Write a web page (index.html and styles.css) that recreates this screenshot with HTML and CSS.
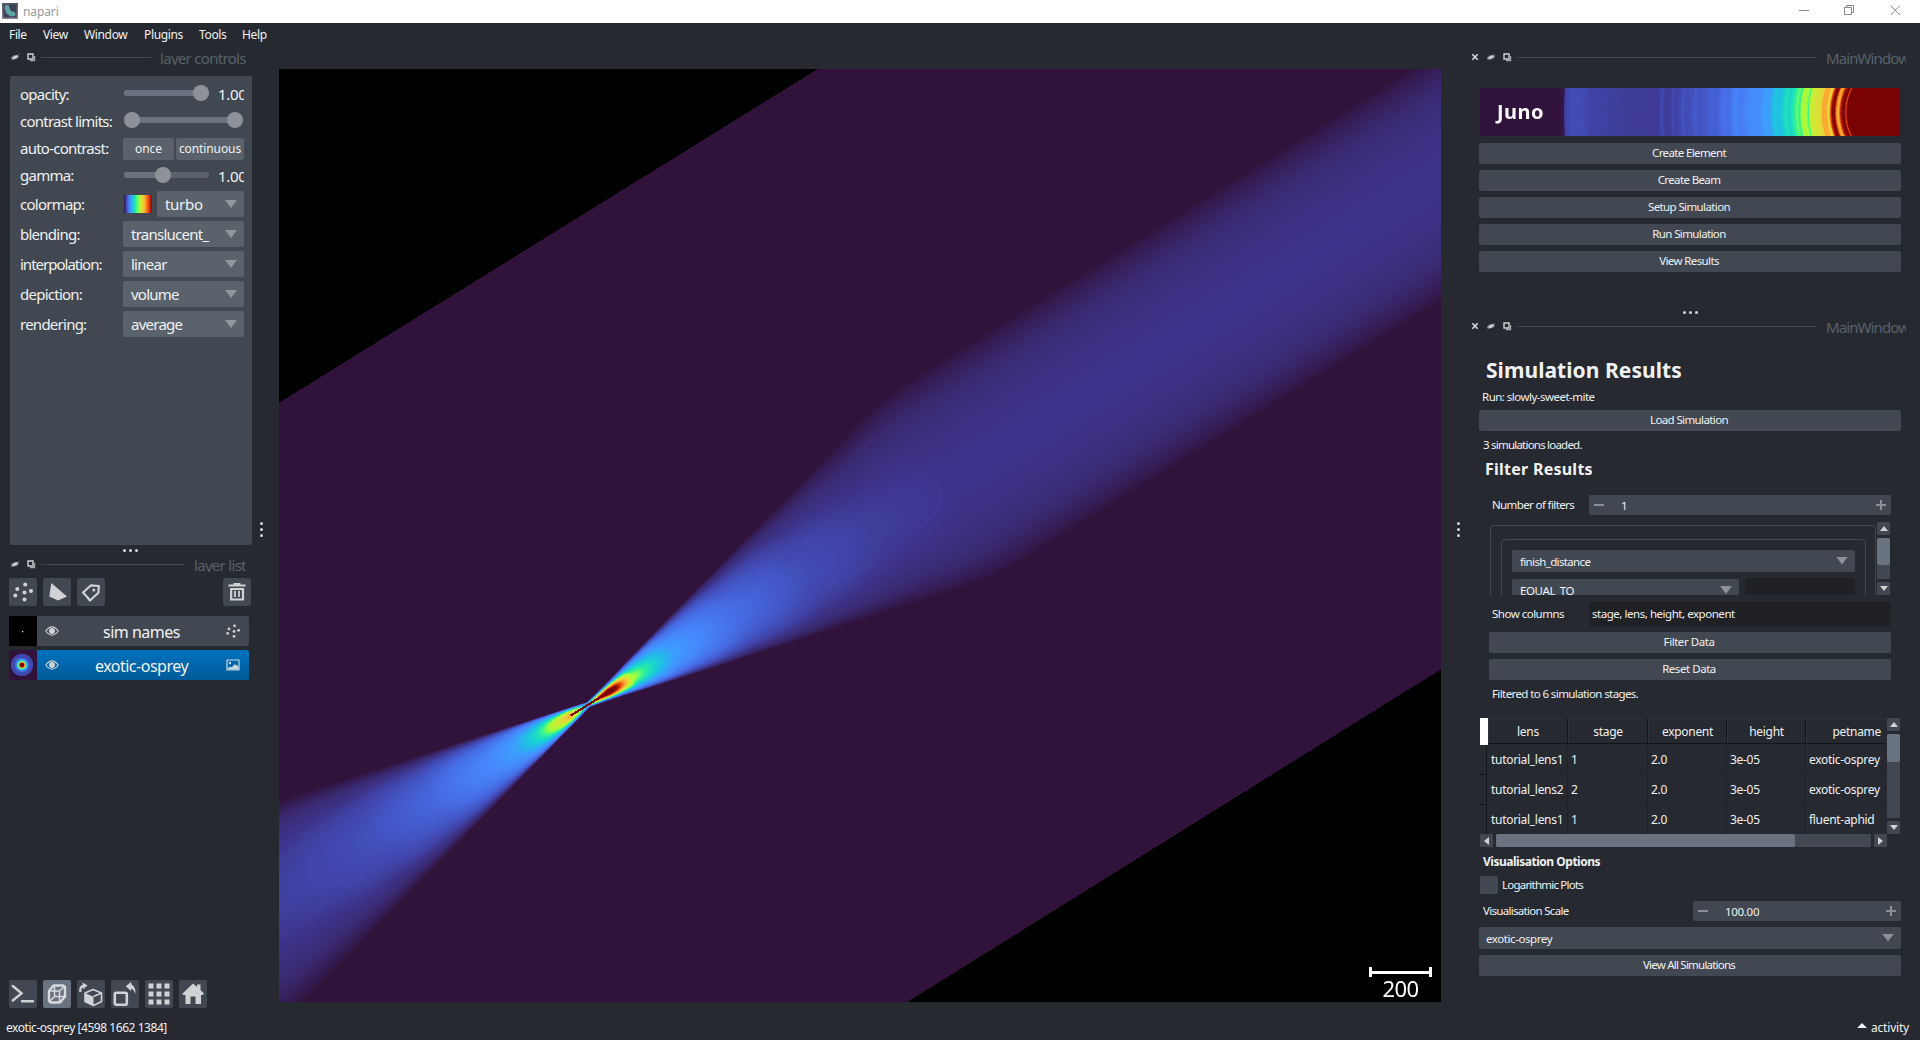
FILE: index.html
```html
<!DOCTYPE html>
<html lang="en">
<head>
<meta charset="utf-8">
<title>napari</title>
<link rel="stylesheet" href="styles.css">
</head>
<body>
<svg class="defs" width="0" height="0">
  <symbol id="hide" viewBox="0 0 10 10"><path d="M.8 6.800Q1.500 3.500 5 3.200Q8.500 3 9 4Q8.500 7 5 7.200Q2 7.500 .8 6.800Z" fill="#85888e"/><path d="M3 6.800L7 3.800" stroke="#dcdddf" stroke-width="2"/><path d="M1.500 8L3 6.800M7 3.800L8.800 2.400" stroke="#85888e"/></symbol>
  <symbol id="float" viewBox="0 0 10 10"><path d="M2 2H7V7H2Z" fill="none" stroke="#d0d1d3" stroke-width="1.400"/><path d="M8.600 4V8.600H4" fill="none" stroke="#a5a8ac" stroke-width="1.200"/></symbol>
  <symbol id="close" viewBox="0 0 10 10"><path d="M2.300 2.300L7.700 7.700M7.700 2.300L2.300 7.700" stroke="#d8d9db" stroke-width="1.600"/></symbol>
  <symbol id="eye" viewBox="0 0 14 10"><path d="M.7 5Q7-3.300 13.300 5Q7 13.300 .7 5Z" fill="none" stroke="#c6cace" stroke-width="1.200"/><circle cx="7" cy="5" r="3" fill="#d0d3d6"/></symbol>
  <symbol id="points" viewBox="0 0 28 28"><g fill="#d1d2d4"><circle cx="16.200" cy="6.600" r="2"/><circle cx="8.300" cy="11" r="2"/><circle cx="22" cy="13" r="2"/><circle cx="15.500" cy="14.600" r="2"/><circle cx="6.300" cy="17.400" r="2"/><circle cx="15.500" cy="21.600" r="2"/></g></symbol>
</svg>

<header class="titlebar">
  <svg class="logo" width="16" height="16"><defs><linearGradient id="lg" x2="0" y2="1"><stop stop-color="#54566b"/><stop offset="1" stop-color="#8f8499"/></linearGradient></defs><rect width="16" height="16" fill="url(#lg)"/><rect x="1.500" y="1.500" width="13" height="13" fill="#3c4052"/><path d="M5 4.500Q5.500 8 7 9.500Q9 11 11 11" fill="none" stroke="#5da3a3" stroke-width="5" stroke-linecap="round"/></svg>
  <span class="app">napari</span>
  <svg class="winbtns" width="110" height="23"><g fill="none" stroke="#8b8b8b"><path d="M9 10.500H19M54.500 7.500H61.500V14.500H54.500ZM56.500 7V5.500H63.500V12.500H62M100.500 5.500L110 15M110 5.500L100.500 15"/></g></svg>
</header>
<nav class="menubar"><span>File</span><span>View</span><span>Window</span><span>Plugins</span><span>Tools</span><span>Help</span></nav>

<main class="main">
  <section class="left">
    <div class="dock"><svg class="di"><use href="#hide"/></svg><svg class="di"><use href="#float"/></svg><i class="rule"></i><span class="dtitle dt-controls">layer controls</span></div>
    <div class="controls">
      <div class="row r-op"><label>opacity:</label><div class="slider"><i class="track"></i><i class="knob k-end"></i></div><span class="val">1.00</span></div>
      <div class="row r-cl"><label>contrast limits:</label><div class="slider wide"><i class="track"></i><i class="knob k-start"></i><i class="knob k-end2"></i></div></div>
      <div class="row r-ac"><label>auto-contrast:</label><div class="pair"><button class="once">once</button><button class="cont">continuous</button></div></div>
      <div class="row r-ga"><label>gamma:</label><div class="slider"><i class="track half"></i><i class="knob k-mid"></i></div><span class="val">1.00</span></div>
      <div class="row r-cb"><label>colormap:</label><i class="swatch"></i><div class="combo short">turbo<i class="tri"></i></div></div>
      <div class="row r-cb"><label>blending:</label><div class="combo">translucent_<i class="tri"></i></div></div>
      <div class="row r-cb"><label class="tight">interpolation:</label><div class="combo">linear<i class="tri"></i></div></div>
      <div class="row r-cb"><label>depiction:</label><div class="combo">volume<i class="tri"></i></div></div>
      <div class="row r-cb"><label>rendering:</label><div class="combo">average<i class="tri"></i></div></div>
    </div>
    <div class="hdots"><i></i><i></i><i></i></div>
    <div class="dock dock-list"><svg class="di"><use href="#hide"/></svg><svg class="di"><use href="#float"/></svg><i class="rule"></i><span class="dtitle dt-list">layer list</span></div>
    <div class="tools">
      <svg class="sq"><use href="#points"/></svg>
      <svg class="sq" viewBox="0 0 28 28"><path d="M8.300 5L24 18.500L15 22.500L6.300 18.500Z" fill="#d1d2d4"/></svg>
      <svg class="sq" viewBox="0 0 28 28"><path d="M6 14.500L14 7.300L21.800 8L21.400 14.800L13 22.500Q10.500 19 6 14.500Z" fill="none" stroke="#d1d2d4" stroke-width="2.200" stroke-linejoin="round"/><circle cx="16.800" cy="12" r="1.500" fill="#d1d2d4"/></svg>
      <svg class="sq trash" viewBox="0 0 28 28"><path d="M5.500 7.500H22.500M10.500 6H17.500M8.200 11V21.500H20V11Z" fill="none" stroke="#d1d2d4" stroke-width="2.200"/><path d="M12 12.800V19M16 12.800V19" stroke="#d1d2d4" stroke-width="1.800"/></svg>
    </div>
    <div class="layer"><svg class="thumb" viewBox="0 0 28 30"><rect width="28" height="30"/><rect x="13" y="15" width="1.200" height="1.200" fill="#fff"/></svg><div class="lrow"><svg class="eye"><use href="#eye"/></svg><span class="lname">sim names</span><svg class="ltype" viewBox="4 4 20 20"><use href="#points" width="28" height="28"/></svg></div></div>
    <div class="layer"><svg class="thumb" viewBox="0 0 28 30"><defs><radialGradient id="th"><stop offset=".18" stop-color="#7a0403"/><stop offset=".2" stop-color="#e8400a"/><stop offset=".27" stop-color="#fbc93a"/><stop offset=".32" stop-color="#4df884"/><stop offset=".42" stop-color="#28bceb"/><stop offset=".52" stop-color="#4680f6"/><stop offset=".65" stop-color="#3f4bb4"/><stop offset=".95" stop-color="#4145ab"/><stop offset="1" stop-color="#30123b"/></radialGradient></defs><rect width="28" height="30" fill="#30123b"/><circle cx="13" cy="15" r="11.500" fill="url(#th)"/></svg><div class="lrow sel"><svg class="eye"><use href="#eye"/></svg><span class="lname">exotic-osprey</span><svg class="ltype" viewBox="0 0 14 14"><path d="M1 2H13V12H1Z" fill="none" stroke="#ccd8e2" stroke-width="1.200" stroke-linejoin="round"/><circle cx="4" cy="5" r="1.200" fill="#ccd8e2"/><path d="M1.500 11.500V10.500L4 8.500L5.500 9.500L9 6L10 7.500L11 7L12.800 9.500V11.500Z" fill="#ccd8e2"/></svg></div></div>
    <div class="viewer-buttons">
      <svg class="sq" viewBox="0 0 28 28"><path d="M3.800 6L12.500 13.300L3.800 20.500M13 21.300H24" fill="none" stroke="#d1d2d4" stroke-width="2.400" stroke-linecap="round"/></svg>
      <svg class="sq on" viewBox="0 0 28 28"><g fill="none" stroke="#d8dadc" stroke-linejoin="round"><path d="M10.500 5.500H20.500L22 7V16.500L17 22.500H7.500L6 21V11Z" stroke-width="2.400"/><path d="M6.500 11H16.500L21.500 6.500M16.500 11V22M11.500 6.500V16.500H21.500M11.500 16.500L7 21" stroke-width="1.500"/></g></svg>
      <svg class="sq" viewBox="0 0 28 28"><path d="M16 9.500L24.500 13V21.500L16.500 25.500L8 21.500V13Z" fill="none" stroke="#d1d2d4" stroke-width="1.600" stroke-linejoin="round"/><path d="M8 13L16.500 16.800V25.500L8 21.500Z" fill="#d1d2d4"/><path d="M16.500 16.500L24.500 13" stroke="#d1d2d4" stroke-width="1.500"/><path d="M3.300 12Q2.800 6.500 7 5.700" fill="none" stroke="#d1d2d4" stroke-width="2.200"/><path d="M5.500 2.500L10.500 5.500L6 9.200Z" fill="#d1d2d4"/></svg>
      <svg class="sq" viewBox="0 0 28 28"><rect x="3.800" y="12.800" width="12" height="12" rx="1.500" fill="none" stroke="#d1d2d4" stroke-width="2.600"/><path d="M14.800 6.200L20 2L20.500 4.500Q25 7 24.300 14Q23 9.500 20.300 8.500L20 11Z" fill="#d1d2d4"/></svg>
      <svg class="sq" viewBox="0 0 28 28"><path d="M3.500 3.500h5v5h-5zM11.500 3.500h5v5h-5zM19.500 3.500h5v5h-5zM3.500 11.500h5v5h-5zM11.500 11.500h5v5h-5zM19.500 11.500h5v5h-5zM3.500 19.500h5v5h-5zM11.500 19.500h5v5h-5zM19.500 19.500h5v5h-5z" fill="#d1d2d4"/></svg>
      <svg class="sq" viewBox="0 0 28 28"><path d="M14 3.500L18 7V4.500H21.500V10L25 13.500L23.500 15H22V24H16.500V16.500H11.500V24H6.500V15H4.500L3.300 13.800Z" fill="#d1d2d4"/></svg>
    </div>
    <div class="vdots"><i></i><i></i><i></i></div>
  </section>

  <section class="view">
    <canvas id="beam" width="1162" height="933"></canvas>
    <div class="scalebar"><i class="bar"></i><span>200</span></div>
  </section>

  <section class="right">
    <div class="dock"><svg class="di"><use href="#close"/></svg><svg class="di"><use href="#hide"/></svg><svg class="di"><use href="#float"/></svg><i class="rule"></i><span class="dtitle dt-main">MainWindow</span></div>
    <div class="juno"><canvas id="banner" width="420" height="48"></canvas><span>Juno</span></div>
    <div class="stack">
      <button>Create Element</button><button>Create Beam</button><button>Setup Simulation</button><button>Run Simulation</button><button>View Results</button>
    </div>
    <div class="hdots"><i></i><i></i><i></i></div>
    <div class="dock dock2"><svg class="di"><use href="#close"/></svg><svg class="di"><use href="#hide"/></svg><svg class="di"><use href="#float"/></svg><i class="rule"></i><span class="dtitle dt-main">MainWindow</span></div>
    <h1>Simulation Results</h1>
    <p class="run">Run: slowly-sweet-mite</p>
    <button class="load">Load Simulation</button>
    <p class="loaded">3 simulations loaded.</p>
    <h2>Filter Results</h2>
    <div class="inner">
      <div class="frow"><span class="fl">Number of filters</span><div class="spin"><i class="minus"></i><b>1</b><i class="plus"></i></div></div>
      <div class="scroller">
        <div class="frames"><div class="outer"><div class="group">
          <div class="cmb">finish_distance<i class="tri"></i></div>
          <div class="two"><div class="cmb eq">EQUAL_TO<i class="tri"></i></div><div class="field"></div></div>
        </div></div></div>
        <div class="vbar"><i class="sb up"></i><i class="tr"><i class="th th1"></i></i><i class="sb down"></i></div>
      </div>
      <div class="frow cols"><span class="fl">Show columns</span><div class="field f2">stage, lens, height, exponent</div></div>
      <button>Filter Data</button>
      <button>Reset Data</button>
      <p class="filtered">Filtered to 6 simulation stages.</p>
    </div>
    <div class="tablewrap">
      <div class="tbl">
        <div class="tr0"><i class="corner"></i><span class="c1">lens</span><span>stage</span><span>exponent</span><span>height</span><span class="pet">petname</span></div>
        <div class="trow"><i class="rh"></i><span class="c1">tutorial_lens1</span><span>1</span><span>2.0</span><span>3e-05</span><span>exotic-osprey</span></div>
        <div class="trow"><i class="rh"></i><span class="c1">tutorial_lens2</span><span>2</span><span>2.0</span><span>3e-05</span><span>exotic-osprey</span></div>
        <div class="trow"><i class="rh"></i><span class="c1">tutorial_lens1</span><span>1</span><span>2.0</span><span>3e-05</span><span>fluent-aphid</span></div>
      </div>
      <div class="vbar tall"><i class="sb up"></i><i class="tr"><i class="th th2"></i></i><i class="sb down"></i></div>
      <div class="hbar"><i class="sb lt"></i><i class="tr"><i class="th th3"></i></i><i class="sb rt"></i></div>
    </div>
    <h3>Visualisation Options</h3>
    <div class="check"><i></i><span>Logarithmic Plots</span></div>
    <div class="vscale"><span>Visualisation Scale</span><div class="spin s2"><i class="minus"></i><b>100.00</b><i class="plus"></i></div></div>
    <div class="cmb vis">exotic-osprey<i class="tri"></i></div>
    <button class="all">View All Simulations</button>
    <div class="vdots vr"><i></i><i></i><i></i></div>
  </section>
</main>
<footer class="status"><span class="st">exotic-osprey [4598 1662 1384]</span><span class="act"><i></i>activity</span></footer>
<script src="script.js"></script>
</body>
</html>
```
FILE: styles.css
```css
* { box-sizing: border-box; }
html { height: 1040px; overflow: hidden; }
body { margin: 0; width: 1920px; height: 1040px; overflow: hidden; display: flex; flex-direction: column; background: #262930; color: #f0f1f2; font: 12px/16px "Noto Sans", "Open Sans", sans-serif; letter-spacing: -.35px; }
i { display: block; flex: none; }
p, h1, h2, h3 { margin: 0; white-space: nowrap; }
svg { flex: none; display: block; }
.defs { position: absolute; }
button { display: flex; align-items: center; justify-content: center; width: 100%; height: 21px; padding: 0 2px 1px 0; border: 0; border-radius: 2px; background: #414851; color: #f0f1f2; font: inherit; letter-spacing: inherit; white-space: nowrap; }

.titlebar { display: flex; height: 23px; background: #fff; color: #999; flex: none; }
.logo { margin: 3px 0 0 2px; }
.app { margin: 4px 0 0 5px; letter-spacing: -.1px; }
.winbtns { margin-left: auto; margin-right: 20px; overflow: visible; }
.menubar { display: grid; grid-template-columns: 34px 41px 60px 55px 43px 40px; padding-left: 9px; height: 23px; line-height: 24px; flex: none; }

.main { display: grid; grid-template-columns: 279px 1162px 479px; height: 970px; flex: none; }
.left, .right { position: relative; display: flex; flex-direction: column; }
.dock { display: flex; height: 22px; align-items: center; color: #59616b; flex: none; }
.di { width: 10px; height: 10px; margin-right: 6px; }
.rule { flex: 1; height: 1px; background: #414851; margin-top: 1px; }
.dtitle { height: 18px; margin-top: -2px; line-height: 23px; overflow: hidden; font-size: 15px; white-space: nowrap; }
.left .dock { padding: 0 33px 0 10px; margin-bottom: 8px; }
.left .rule { margin-right: 9px; margin-left: -1px; }
.left .dock-list { margin: 1px 0 3px; }
.dt-controls { width: 86px; letter-spacing: -.7px; }
.dt-list { width: 52px; letter-spacing: -.7px; }

.controls { width: 242px; height: 469px; margin-left: 10px; padding: 5px 8px 0 10px; background: #414851; border-radius: 2px; font-size: 15px; letter-spacing: -.75px; flex: none; }
.row { display: flex; align-items: center; }
.row label { width: 103px; flex: none; white-space: nowrap; margin-top: -1px; }
.row .tight { letter-spacing: -1px; }
.r-op { height: 26px; } .r-cl { height: 28px; } .r-ac { height: 27px; } .r-ga { height: 27px; } .r-cb { height: 30px; }
.slider { position: relative; width: 85px; height: 16px; margin: -2px 9px 0 1px; flex: none; }
.slider.wide { width: 119px; margin-right: 0; }
.track { height: 6px; margin: 5px 0; border-radius: 2px; background: #6a7380; }
.wide .track { margin-right: 1px; }
.half { background: linear-gradient(90deg, #6a7380 46%, #5a626c 46%); }
.knob { position: absolute; top: 0; width: 16px; height: 16px; border-radius: 50%; background: #8d9299; }
.k-end { right: 0; } .k-start { left: 0; } .k-end2 { right: 0; } .k-mid { left: 31px; }
.val { width: 26px; overflow: hidden; white-space: nowrap; letter-spacing: -.3px; }
.pair { display: flex; gap: 2px; }
.pair button { height: 22px; background: #5a626c; font-size: 12px; padding: 0; letter-spacing: -.1px; }
.pair .once { width: 51px; } .pair .cont { width: 68px; }
.swatch { width: 28px; height: 18px; margin: 0 5px 0 1px; background: linear-gradient(90deg, #30123b, #4145ab 8%, #4675ed 16%, #39a2fc 25%, #1bcfd4 34%, #24eca6 41%, #61fc6c 48%, #a4fc3b 55%, #d1e834 62%, #f3c63a 70%, #fe9b2d 77%, #f36315 84%, #d93806 90%, #b11901 95%, #7a0402); }
.combo { display: flex; align-items: center; justify-content: space-between; width: 121px; height: 26px; padding: 0 7px 0 8px; border-radius: 2px; background: #5a626c; }
.combo.short { width: 87px; letter-spacing: -.3px; }
.tri { width: 12px; height: 8px; background: #93979d; clip-path: polygon(0 0, 100% 0, 50% 100%); }
.hdots { display: flex; gap: 3px; justify-content: center; height: 3px; flex: none; }
.left .hdots { margin: 4px 19px 1px 0; }
.left .hdots + .dock { margin-top: 0; }
.hdots i, .vdots i { width: 3px; height: 3px; border-radius: 50%; background: #d5d6d8; }
.vdots { position: absolute; left: 260px; top: 476px; display: grid; gap: 3px; }
.tools { display: flex; gap: 6px; padding-left: 9px; margin-bottom: 10px; }
.trash { margin-left: 112px; }
.sq { width: 28px; height: 28px; border-radius: 2px; background: #414851; }
.sq.on { background: #6a7380; }
.layer { display: flex; height: 30px; margin: 0 30px 4px 9px; font-size: 16px; flex: none; }
.thumb { width: 28px; height: 30px; }
.lrow { display: flex; flex: 1; align-items: center; justify-content: space-between; background: #414851; border-radius: 0 2px 2px 0; padding: 0 9px 0 8px; }
.lrow.sel { background: linear-gradient(#0072bd, #005a98); }
.eye { width: 14px; height: 10px; }
.ltype { width: 14px; height: 14px; }
.lname { padding: 2px 2px 0 0; letter-spacing: -.5px; }
.viewer-buttons { display: flex; gap: 6px; margin: auto 0 8px 9px; }

.view { position: relative; padding-top: 23px; }
.view canvas { display: block; }
.scalebar { position: absolute; left: 1090px; top: 921px; width: 63px; text-align: center; font-size: 22px; line-height: 26px; letter-spacing: -.6px; }
.scalebar .bar { height: 10px; border: solid #fff; border-width: 0 3px; background: linear-gradient(#fff, #fff) 0 4px / 100% 3px no-repeat; }
.scalebar span { display: block; color: #fff; margin-top: -2px; }

.right { padding: 0 19px 0 38px; font-size: 11.5px; letter-spacing: -.62px; }
.right .dock { margin: 0 -5px 20px -9px; }
.right .rule { margin-right: 9px; margin-left: -1px; }
.dt-main { width: 80px; letter-spacing: -.9px; }
.juno { position: relative; height: 48px; margin-left: 1px; flex: none; }
.juno canvas { display: block; }
.juno span { position: absolute; left: 17px; top: 12px; font: bold 20px/24px "Noto Sans", sans-serif; color: #fff; letter-spacing: .5px; }
.stack { display: grid; gap: 6px; margin-top: 7px; }
.right .hdots { margin: 39px 0 0; }
.right .dock2 { margin-top: 1px; margin-bottom: 20px; }
h1 { font: bold 21px/26px "Noto Sans", sans-serif; letter-spacing: .05px; padding-left: 7px; }
.run { margin: 6px 0 5px 3px; letter-spacing: -.52px; }
.loaded { margin: 6px 0 6px 4px; }
.load { flex: none; }
h2 { font: bold 16px/20px "Noto Sans", sans-serif; letter-spacing: .25px; padding-left: 6px; margin-bottom: 16px; }
.inner { padding: 0 10px; flex: none; }
.frow { display: flex; align-items: center; }
.fl { width: 100px; padding-left: 3px; white-space: nowrap; }
.spin { display: flex; align-items: center; width: 302px; height: 20px; padding: 0 5px; border-radius: 2px; background: #414851; }
.spin b { font-weight: 400; margin: 1px auto 0 17px; }
.minus, .plus { width: 10px; height: 10px; background: linear-gradient(#8d9197, #8d9197) 0 4px / 10px 2px no-repeat; }
.plus { background: linear-gradient(#8d9197, #8d9197) 0 4px / 10px 2px no-repeat, linear-gradient(#8d9197, #8d9197) 4px 0 / 2px 10px no-repeat; }
.loaded, .check, .all { letter-spacing: -.78px; }
.scroller { display: flex; height: 73px; margin: 7px 0; overflow: hidden; }
.frames { width: 388px; height: 73px; padding: 3px 0 0 1px; overflow: hidden; }
.outer { width: 386px; height: 100px; border: 1px solid #414851; border-radius: 4px; padding: 13px 0 0 10px; }
.group { width: 365px; height: 100px; border: 1px solid #414851; border-radius: 4px; padding: 10px; }
.cmb { display: flex; align-items: center; justify-content: space-between; height: 22px; padding: 1px 7px 0 8px; border-radius: 2px; background: #414851; flex: none; letter-spacing: -.65px; }
.cmb .tri { margin-top: -2px; background: #8d9197; }
.two { display: flex; gap: 6px; margin-top: 6px; }
.eq { width: 227px; height: 23px; margin-top: 1px; letter-spacing: -.4px; }
.field { width: 110px; height: 24px; border-radius: 2px; background: #202124; }
.vbar { display: flex; flex-direction: column; gap: 3px; width: 13px; height: 73px; }
.tr { flex: 1; background: #414851; border-radius: 1px; }
.th { background: #6a7380; border-radius: 2px; }
.th1 { height: 27px; } .th2 { height: 28px; } .th3 { width: 299px; height: 13px; }
.sb { position: relative; width: 13px; height: 13px; background: #414851; border-radius: 1px; }
.sb::after { content: ""; position: absolute; left: 3px; top: 4px; width: 8px; height: 5px; background: #d1d2d4; clip-path: polygon(50% 0, 100% 100%, 0 100%); }
.down::after { clip-path: polygon(0 0, 100% 0, 50% 100%); }
.lt::after, .rt::after { left: 4px; top: 3px; width: 5px; height: 8px; clip-path: polygon(0 50%, 100% 0, 100% 100%); }
.rt::after { clip-path: polygon(0 0, 100% 50%, 0 100%); }
.f2 { width: 302px; padding: 4px 3px; letter-spacing: -.46px; }
.cols { margin-bottom: 6px; }
.cols .fl { letter-spacing: -.5px; }
.inner button { letter-spacing: -.45px; }
.inner button + button { margin-top: 6px; }
.filtered { margin: 6px 0 16px 3px; letter-spacing: -.6px; }
.tablewrap { display: grid; grid-template-columns: 407px 13px; grid-template-rows: 116px 13px; margin-left: 1px; flex: none; font-size: 12px; }
.tbl { overflow: hidden; width: 406px; letter-spacing: -.3px; }
.tr0, .trow { display: grid; grid-template-columns: 8px 80px 80px 79px 79px 81px; }
.tr0 { height: 27px; line-height: 26px; text-align: center; }
.tr0 span { height: 26px; border-right: 1px solid #141518; border-bottom: 1px solid #141518; border-left: 1px solid #30333a; border-top: 1px solid #30333a; }
.tr0 .pet { text-align: right; padding-right: 6px; border-right: 0; }
.corner { height: 27px; background: #fff; }
.trow { height: 30px; line-height: 29px; }
.trow span { padding-left: 3px; border-right: 1px solid #202329; border-bottom: 1px solid #202329; white-space: nowrap; }
.rh { width: 7px; height: 30px; border-right: 1px solid #141518; border-bottom: 1px solid #141518; }
.tall { height: 116px; }
.hbar { display: flex; gap: 3px; width: 407px; height: 13px; grid-column: 1; }
h3 { font: bold 12px/16px "Noto Sans", sans-serif; letter-spacing: -.48px; margin: 7px 0 6px 4px; }
.check { display: flex; align-items: center; gap: 4px; height: 18px; margin-left: 1px; }
.check i { width: 18px; height: 18px; border-radius: 2px; background: #414851; }
.vscale { display: flex; align-items: center; justify-content: space-between; margin: 7px 0 6px; padding-left: 4px; letter-spacing: -.7px; }
.s2 { width: 208px; } .s2 b { letter-spacing: -.3px; }
.vis { padding-left: 7px; letter-spacing: -.42px; }
.all { margin-top: 6px; flex: none; }
.vr { left: 16px; }
.status { display: flex; justify-content: space-between; padding: 4px 11px 0 6px; letter-spacing: -.45px; }
.act { display: flex; gap: 4px; letter-spacing: -.2px; }
.act i { width: 10px; height: 5px; margin-top: 3px; background: #f0f1f2; clip-path: polygon(50% 0, 100% 100%, 0 100%); }
```
FILE: script.js
```js
// Turbo colour map, as stops of [value, r, g, b].
const TURBO = [
  [0, 48, 18, 59], [0.03, 57, 41, 112], [0.05, 61, 51, 137], [0.0625, 64, 64, 162], [0.09, 67, 84, 195],
  [0.125, 70, 107, 227], [0.1875, 70, 134, 251], [0.25, 62, 155, 254], [0.3125, 34, 187, 233],
  [0.375, 24, 215, 203], [0.4375, 50, 242, 151], [0.47, 109, 253, 98], [0.5, 164, 252, 60],
  [0.5625, 196, 240, 51], [0.625, 225, 221, 55], [0.6875, 248, 190, 57], [0.75, 254, 155, 45],
  [0.8125, 242, 100, 20], [0.875, 217, 56, 6], [0.9375, 172, 23, 1], [1, 122, 4, 3]
];

// Linear interpolation in a table whose rows start with their key.
function lookup(table, key) {
  if (key <= table[0][0]) return table[0].slice(1);
  for (let i = 1; i < table.length; i++) {
    if (key <= table[i][0]) {
      const a = table[i - 1], b = table[i], f = (key - a[0]) / (b[0] - a[0]);
      return a.slice(1).map((v, k) => v + (b[k + 1] - v) * f);
    }
  }
  return table[table.length - 1].slice(1);
}

const LUT = Array.from({ length: 1024 }, (_, i) => lookup(TURBO, i / 1023));
const turbo = v => LUT[Math.max(0, Math.min(1023, Math.round(v * 1023)))];

function paint(id, shade) {
  const canvas = document.getElementById(id);
  const ctx = canvas.getContext("2d");
  const image = ctx.createImageData(canvas.width, canvas.height);
  let p = 0;
  for (let y = 0; y < canvas.height; y++) {
    for (let x = 0; x < canvas.width; x++) {
      const c = shade(x, y);
      image.data[p++] = c[0];
      image.data[p++] = c[1];
      image.data[p++] = c[2];
      image.data[p++] = 255;
    }
  }
  ctx.putImageData(image, 0, 0);
}

// By distance from the focus: intensity on the beam axis, and how sharply it falls off sideways.
const AXIS = [
  [-420, 0.055, 0.85], [-330, 0.066, 0.85], [-250, 0.085, 0.85], [-180, 0.12, 0.85], [-111, 0.2, 0.8],
  [-83, 0.27, 0.8], [-62, 0.38, 0.8], [-51, 0.46, 0.8], [-35, 0.6, 0.9], [-22, 0.72, 1], [-12, 0.6, 1],
  [-4, 0.35, 1], [2, 0.45, 1.2], [8, 0.75, 1.8], [16, 1, 2], [24, 1.12, 2], [32, 1, 1.9], [42, 0.74, 1.5],
  [52, 0.51, 1.1], [66, 0.43, 1], [80, 0.35, 0.9], [98, 0.26, 0.85], [123, 0.2, 0.8], [170, 0.13, 0.8],
  [250, 0.08, 0.8], [330, 0.06, 0.8], [427, 0.051, 0.75], [1200, 0.05, 0.75]
];
const AXIS_LUT = Array.from({ length: 1700 }, (_, i) => lookup(AXIS, i - 450));
const BLACK = [0, 0, 0];
const ANGLE = 31.8 * Math.PI / 180, CA = Math.cos(ANGLE), SA = Math.sin(ANGLE);

paint("beam", (x, y) => {
  if (y < 333 - x * 0.6195 || y > 933 - (x - 627) * 0.6235) return BLACK;
  const dx = x - 309, dy = y - 635;
  const u = dx * CA - dy * SA, v = dx * SA + dy * CA;
  if (u > -21 && u < 20 && Math.abs(v) < 1.1) return turbo(1);
  const cone = 0.25 * Math.abs(u) + 3, limit = 106;
  const w = -2.5 * Math.log(Math.exp(-cone / 2.5) + Math.exp(-limit / 2.5));
  const t = Math.abs(v) / w;
  if (t >= 1) return turbo(0);
  const [axis, falloff] = AXIS_LUT[Math.max(0, Math.min(1699, Math.round(u + 450)))];
  const ripple = 1 + 0.035 * t * Math.sin(t * t * 55);
  return turbo(axis * Math.pow(1 - t * t, falloff) * ripple);
});

// Ring intensity of the banner, by position on its middle row.
const RINGS = [
  [0, 0], [78, 0], [83, 0.008], [84, 0.06], [88, 0.075], [92, 0.08], [103, 0.078], [108, 0.066], [145, 0.058],
  [178, 0.057], [181, 0.075], [184, 0.058], [190, 0.06], [192, 0.075], [195, 0.062], [200, 0.075], [202, 0.09],
  [205, 0.078], [211, 0.085], [214, 0.1], [218, 0.088], [224, 0.095], [230, 0.11], [236, 0.105], [243, 0.14],
  [248, 0.13], [254, 0.185], [260, 0.16], [270, 0.21], [278, 0.2], [284, 0.26], [289, 0.25], [293, 0.34],
  [299, 0.32], [305, 0.4], [309, 0.37], [313, 0.42], [317, 0.47], [319, 0.43], [322, 0.53], [326, 0.5],
  [328, 0.44], [330, 0.58], [340, 0.63], [342, 0.73], [346, 0.72], [348, 0.6], [350, 0.85], [352, 1], [354, 1],
  [356, 0.76], [358, 0.7], [360, 0.92], [362, 1], [364, 1], [365.2, 0.84], [366.4, 1], [420, 1]
];
paint("banner", (x, y) => {
  const dx = 418 - x, dy = y - 24;
  const r = Math.sqrt(dx * dx + dy * dy);
  const pos = x < 82 ? x : 418 - r;
  const grain = 1 + 0.03 * Math.sin(x * 12.9898 + y * 78.233) * (pos < 362 ? 1 : 0);
  return turbo((x > 418 ? 1 : lookup(RINGS, pos)[0]) * grain);
});
```
